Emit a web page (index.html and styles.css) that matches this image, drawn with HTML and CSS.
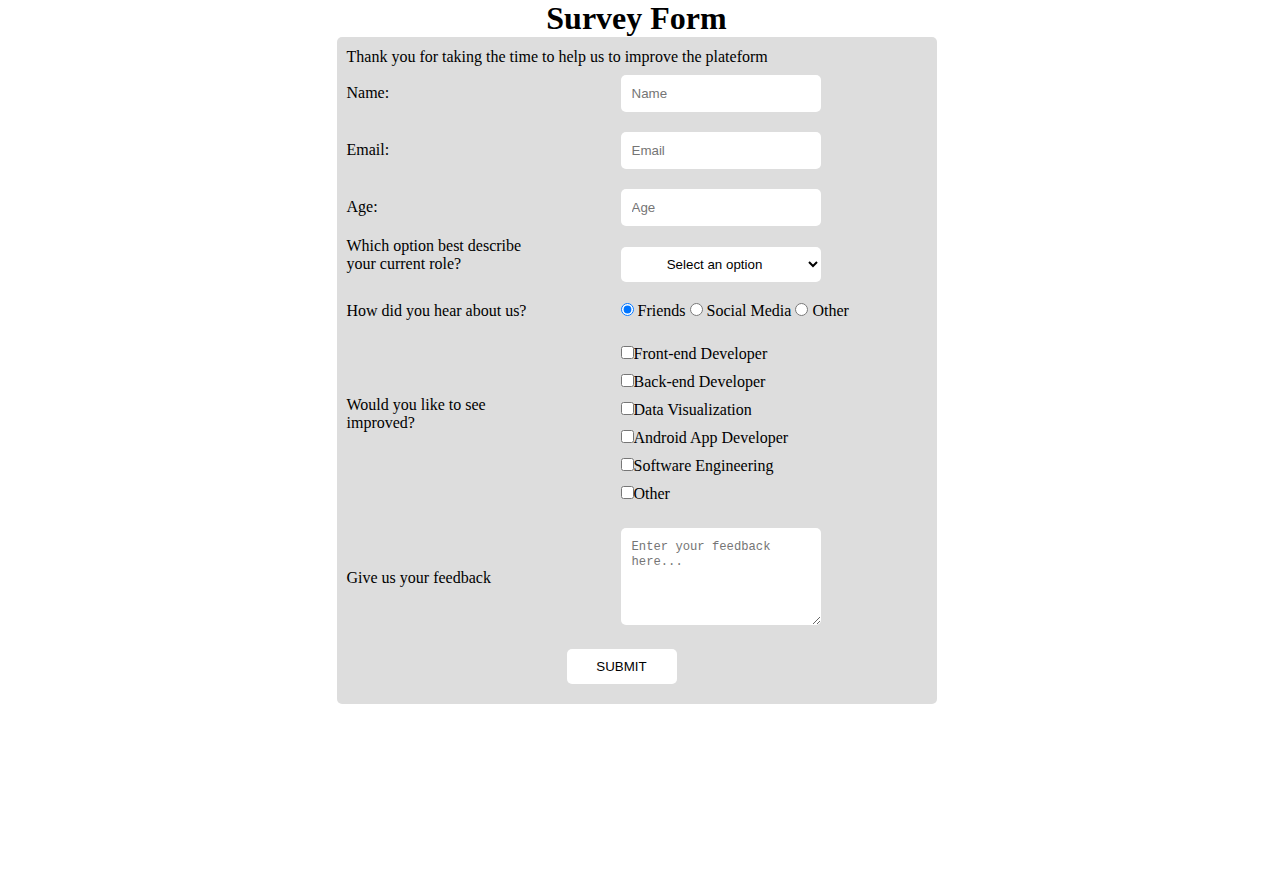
FILE: index.html
```html
<!DOCTYPE html>
<html lang="en">
<head>
<meta charset="utf-8">
<title>Survey Form</title>
<link rel="stylesheet" href="styles.css">
</head>
<body>
<h1 class="title">Survey Form</h1>
<form class="card">
  <p class="intro">Thank you for taking the time to help us to improve the plateform</p>

  <div class="row row--field">
    <label class="label label--field" for="name">Name:</label>
    <div class="control"><input class="field" id="name" type="text" placeholder="Name"></div>
  </div>

  <div class="row row--field">
    <label class="label label--field" for="email">Email:</label>
    <div class="control"><input class="field" id="email" type="email" placeholder="Email"></div>
  </div>

  <div class="row row--field">
    <label class="label label--field" for="age">Age:</label>
    <div class="control"><input class="field" id="age" type="number" placeholder="Age"></div>
  </div>

  <div class="row row--role">
    <label class="label label--raised" for="role">Which option best describe your current role?</label>
    <div class="control">
      <select class="field field--select" id="role">
        <option>Select an option</option>
        <option>Student</option>
        <option>Full-time job</option>
        <option>Other</option>
      </select>
    </div>
  </div>

  <div class="row row--radio">
    <span class="label">How did you hear about us?</span>
    <div class="control radios">
      <input class="radio" type="radio" name="source" checked> Friends
      <input class="radio" type="radio" name="source"> Social Media
      <input class="radio" type="radio" name="source"> Other
    </div>
  </div>

  <div class="row row--checks">
    <span class="label label--lowered">Would you like to see improved?</span>
    <div class="control checks">
      <label class="check"><input class="checkbox" type="checkbox">Front-end Developer</label>
      <label class="check"><input class="checkbox" type="checkbox">Back-end Developer</label>
      <label class="check"><input class="checkbox" type="checkbox">Data Visualization</label>
      <label class="check"><input class="checkbox" type="checkbox">Android App Developer</label>
      <label class="check"><input class="checkbox" type="checkbox">Software Engineering</label>
      <label class="check"><input class="checkbox" type="checkbox">Other</label>
    </div>
  </div>

  <div class="row row--feedback">
    <label class="label label--lowered" for="feedback">Give us your feedback</label>
    <div class="control"><textarea class="textarea" id="feedback" placeholder="Enter your feedback here..."></textarea></div>
  </div>

  <div class="submit-row">
    <button class="submit" type="submit">SUBMIT</button>
  </div>
</form>
</body>
</html>
```

FILE: styles.css
```css
html, body {
  margin: 0;
  padding: 0;
  background: #ffffff;
  color: #000000;
  font-family: "Liberation Serif", "Times New Roman", serif;
  font-size: 16px;
}

.title {
  margin: 0;
  text-align: center;
  font-size: 32px;
  font-weight: bold;
  line-height: 37px;
}

.card {
  width: 600px;
  box-sizing: border-box;
  margin: 0 auto;
  padding: 10px 10px 20px;
  background: #dddddd;
  border-radius: 5px;
  line-height: 18px;
}

.intro {
  margin: 1px 0 9px;
}

.row {
  display: flex;
}

.label {
  flex: 0 0 274px;
  box-sizing: border-box;
  padding-right: 79px;
}

.control {
  flex: 1 1 auto;
}

.row--field {
  align-items: center;
  margin-bottom: 20px;
}

.label--field {
  margin-top: -2px;
}

.field {
  display: block;
  box-sizing: border-box;
  width: 200px;
  height: 37px;
  margin: 0;
  padding: 0 10px 0 11px;
  border: none;
  border-radius: 5px;
  background: #ffffff;
  font-family: "Liberation Sans", Arial, sans-serif;
  font-size: 13.333px;
  color: #000000;
}

.field::placeholder {
  color: #757575;
}

.row--role {
  align-items: flex-start;
  margin-bottom: 20px;
}

.label--raised {
  margin-top: -9px;
}

.field--select {
  height: 35px;
  margin-top: 1px;
  padding: 0 4px;
  text-align: center;
  text-align-last: center;
}

.row--radio {
  align-items: baseline;
  margin-bottom: 3px;
}

.radio {
  margin: 0;
  width: 13px;
  height: 13px;
}

.row--checks {
  align-items: center;
  margin-bottom: 25px;
}

.label--lowered {
  margin-top: 2px;
}

.checks {
  padding-top: 22px;
}

.check {
  display: block;
  margin-bottom: 10px;
}

.check:last-child {
  margin-bottom: 0;
}

.checkbox {
  margin: 0;
  width: 13px;
  height: 13px;
}

.row--feedback {
  align-items: center;
}

.textarea {
  display: block;
  box-sizing: border-box;
  width: 200px;
  height: 97px;
  margin: 0;
  padding: 12px 10px 10px 11px;
  border: none;
  border-radius: 5px;
  background: #ffffff;
  font-family: "Liberation Mono", "DejaVu Sans Mono", monospace;
  font-size: 12.2px;
  line-height: 15px;
}

.textarea::placeholder {
  color: #757575;
}

.submit-row {
  display: flex;
  justify-content: center;
  padding-right: 30px;
  margin-top: 24px;
}

.submit {
  width: 110px;
  height: 35px;
  margin: 0;
  padding: 0;
  border: none;
  border-radius: 5px;
  background: #ffffff;
  color: #000000;
  font-family: "Liberation Sans", Arial, sans-serif;
  font-size: 13.333px;
  cursor: pointer;
}
```
